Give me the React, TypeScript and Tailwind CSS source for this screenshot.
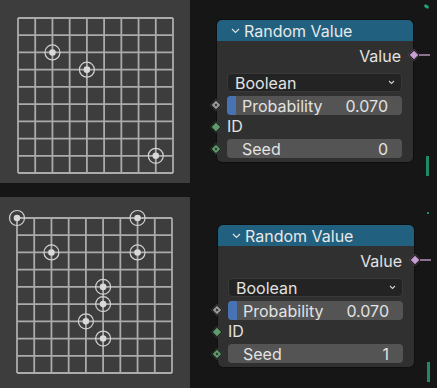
import React from 'react';

type Pt = [number, number];

const CELL = 155 / 9;

const GridPanel: React.FC<{ points: Pt[]; gx: number; gy: number; h: string }> = ({ points, gx, gy, h }) => (
  <div className={`w-[190px] ${h} bg-[#3d3d3d] shrink-0`}>
    <svg width="190" height="200" className="block">
      <g transform={`translate(${gx} ${gy})`}>
        {Array.from({ length: 10 }).map((_, i) => (
          <g key={i}>
            <line x1={i * CELL} y1={0} x2={i * CELL} y2={155} stroke="#ababab" strokeWidth={1.8} />
            <line x1={0} y1={i * CELL} x2={155} y2={i * CELL} stroke="#ababab" strokeWidth={1.8} />
          </g>
        ))}
        {points.map(([x, y], i) => (
          <g key={i}>
            <circle cx={x * CELL} cy={y * CELL} r={7.5} fill="none" stroke="#d2d2d2" strokeWidth={1.2} />
            <circle cx={x * CELL} cy={y * CELL} r={3.3} fill="#d8d8d8" />
          </g>
        ))}
      </g>
    </svg>
  </div>
);

const Socket: React.FC<{ color: string; hollow?: boolean; className: string }> = ({ color, hollow, className }) => (
  <div className={`absolute w-[12px] h-[12px] flex items-center justify-center ${className}`}>
    <div className="w-[8px] h-[8px] rotate-45 flex items-center justify-center border border-[#1a1a1a]" style={{ background: color }}>
      {hollow && <div className="w-[2px] h-[2px] bg-[#2a2a2a]" />}
    </div>
  </div>
);

const RandomValueNode: React.FC<{ seed: string; className: string }> = ({ seed, className }) => (
  <div className={`relative w-[196px] rounded-[5px] shadow-[0_0_0_1px_#0f0f0f] leading-[18px] ${className}`}>
    <div className="h-[21px] bg-[#21607f] rounded-t-[5px] flex items-center pl-[14px] gap-[4px] text-[#e8e8e8] text-[16px]">
      <svg width="9" height="6" viewBox="0 0 9 6"><path d="M1 1 L4.5 4.5 L8 1" fill="none" stroke="#e0e0e0" strokeWidth="1.2" /></svg>
      <span>Random Value</span>
    </div>
    <div className="bg-[#303030] rounded-b-[5px] pt-[5px] pb-[4px] px-[10px] pr-[11px] text-[16px] text-[#e2e2e2]">
      <div className="h-[20px] flex items-center justify-end pr-[1px]">Value</div>
      <div className="mt-[7px] h-[19px] bg-[#232323] border border-[#393939] rounded-[4px] flex items-center justify-between pl-[7px] pr-[6px]">
        <span>Boolean</span>
        <svg width="7" height="5" viewBox="0 0 7 5"><path d="M1 1 L3.5 3.5 L6 1" fill="none" stroke="#d0d0d0" strokeWidth="1.1" /></svg>
      </div>
      <div className="mt-[4px] h-[19px] bg-[#545454] rounded-[4px] flex items-center overflow-hidden">
        <div className="w-[9px] h-full bg-[#4772b3] shrink-0" />
        <span className="ml-[6px]">Probability</span>
        <span className="ml-auto mr-[14px]">0.070</span>
      </div>
      <div className="h-[22px] flex items-center">ID</div>
      <div className="mt-[2px] h-[19px] bg-[#545454] rounded-[4px] flex items-center justify-between pl-[15px] pr-[14px]">
        <span>Seed</span>
        <span>{seed}</span>
      </div>
    </div>
    <Socket color="#c89fd4" className="right-[-7px] top-[29px]" />
    <div className="absolute right-[-17px] top-[34px] w-[11px] h-[2px] bg-[#8d6f8f]" />
    <Socket color="#9a9a9a" hollow className="left-[-7px] top-[79px]" />
    <Socket color="#5f9b6c" className="left-[-7px] top-[101px]" />
    <Socket color="#5f9b6c" hollow className="left-[-7px] top-[123px]" />
  </div>
);

export default function App() {
  return (
    <div className="relative w-[437px] h-[388px] bg-[#161616] overflow-hidden" style={{ fontFamily: 'Inter, "Noto Sans", sans-serif' }}>
      <div className="flex h-[197px]">
        <GridPanel h="h-[183px]" gx={18} gy={18} points={[[2, 2], [4, 3], [8, 8]]} />
        <RandomValueNode seed="0" className="ml-[27px] mt-[20px] self-start" />
      </div>
      <div className="flex h-[191px]">
        <GridPanel h="h-[191px]" gx={17} gy={21} points={[[0, 0], [7, 0], [2, 2], [7, 2], [5, 4], [5, 5], [4, 6], [5, 7]]} />
        <RandomValueNode seed="1" className="ml-[28px] mt-[28px] self-start" />
      </div>
      <div className="absolute left-[424px] top-[5px] w-[5px] h-[3px] bg-[#1fa57c] rotate-[35deg] rounded-full" />
      <div className="absolute left-[426px] top-[156px] w-[3px] h-[20px] bg-[#1f8a63]" />
      <div className="absolute left-[427px] top-[212px] w-[2px] h-[2px] bg-[#1f8a63]" />
      <div className="absolute left-[427px] top-[362px] w-[3px] h-[20px] bg-[#1f8a63]" />
    </div>
  );
}
